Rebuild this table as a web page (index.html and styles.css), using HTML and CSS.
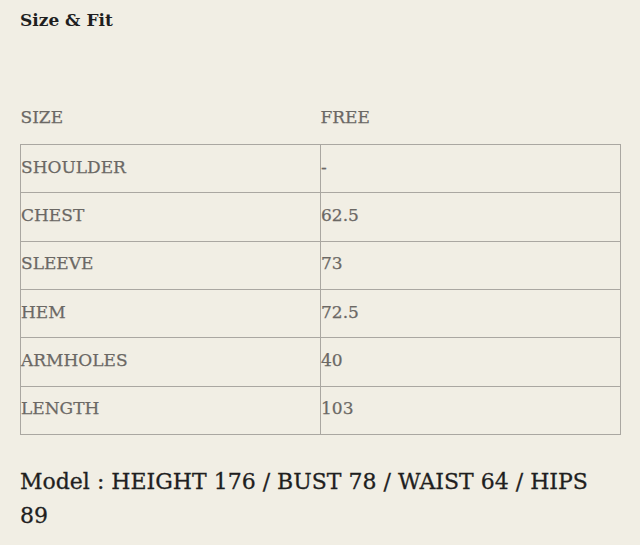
FILE: index.html
```html
<!DOCTYPE html>
<html>
<head>
<meta charset="utf-8">
<link rel="stylesheet" href="styles.css">
</head>
<body>
<div class="page">
  <h2 class="title">Size &amp; Fit</h2>
  <table class="size-table">
    <thead>
      <tr><th>SIZE</th><th>FREE</th></tr>
    </thead>
    <tbody>
      <tr><td>SHOULDER</td><td>-</td></tr>
      <tr><td>CHEST</td><td>62.5</td></tr>
      <tr><td>SLEEVE</td><td>73</td></tr>
      <tr><td>HEM</td><td>72.5</td></tr>
      <tr><td>ARMHOLES</td><td>40</td></tr>
      <tr><td>LENGTH</td><td>103</td></tr>
    </tbody>
  </table>
  <p class="model">Model : HEIGHT 176 / BUST 78 / WAIST 64 / HIPS 89</p>
</div>
</body>
</html>
```

FILE: styles.css
```css
html, body {
  margin: 0;
  padding: 0;
  background: #f1eee4;
}
.page {
  padding: 0 20px;
  font-family: "DejaVu Serif", "Liberation Serif", serif;
}
.title {
  margin: 0;
  padding-top: 8px;
  font-size: 17px;
  font-weight: bold;
  color: #1f1f1f;
  line-height: 24px;
  height: 96px;
  box-sizing: border-box;
}
.size-table {
  width: 601px;
  border-collapse: collapse;
  color: #6b6864;
  font-size: 17px;
  -webkit-text-stroke: 0.25px #6b6864;
}
.size-table th {
  text-align: left;
  font-weight: normal;
  height: 42px;
  padding: 0 0 6px;
  vertical-align: middle;
}
.size-table th:first-child,
.size-table td:first-child {
  width: 300px;
}
.size-table td {
  border: 1px solid #aaa7a1;
  height: 48.33px;
  padding: 0 0 4px;
  box-sizing: border-box;
  vertical-align: middle;
}
.model {
  margin: 30px 0 0;
  font-size: 22px;
  line-height: 34px;
  color: #1f1f1f;
  -webkit-text-stroke: 0.3px #1f1f1f;
}
```
